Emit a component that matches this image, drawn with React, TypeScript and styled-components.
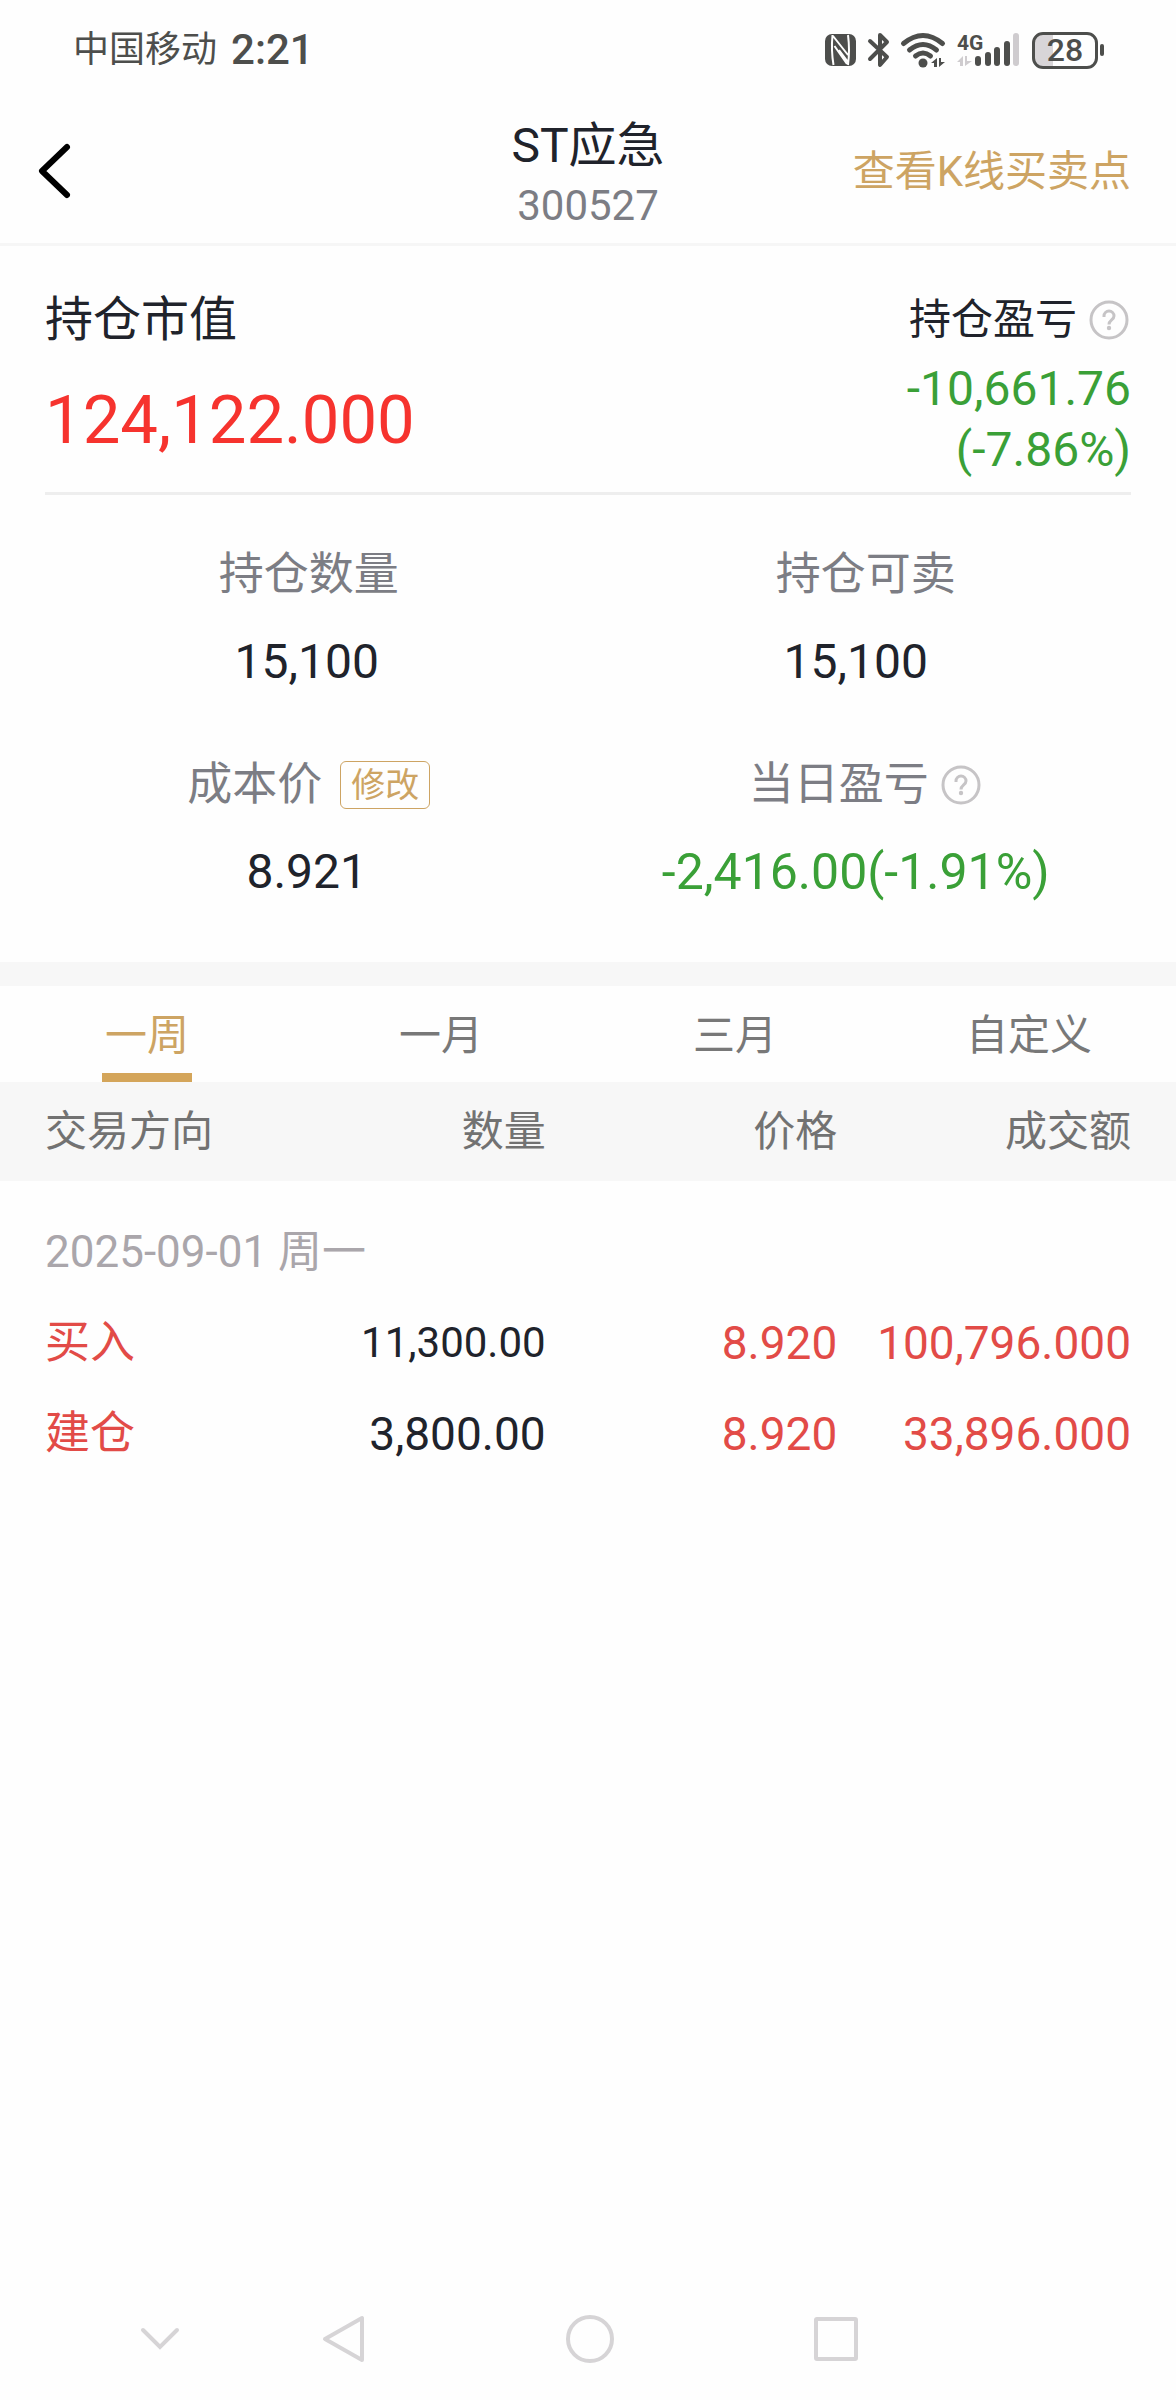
import React, { useState } from 'react';
import styled, { createGlobalStyle } from 'styled-components';

const color = {
  page: '#fefefe',
  band: '#f7f7f7',
  line: '#eeeeee',
  ink: '#20232b',
  status: '#4d4e4c',
  label: '#7c7d84',
  tab: '#787878',
  date: '#aaa6ab',
  hint: '#c6c4c6',
  nav: '#d6d4d6',
  gold: '#cda463',
  goldBar: '#d4a55a',
  up: '#f6332e',
  buy: '#e24b47',
  down: '#3aa037',
};

const GlobalStyle = createGlobalStyle`
  *, *::before, *::after { box-sizing: border-box; }
  body {
    margin: 0;
    background: ${color.page};
    color: ${color.ink};
    font-family: Roboto, 'Noto Sans CJK SC', sans-serif;
    font-size: 42px;
    line-height: 60px;
  }
  h1, h2, p, dl, dt, dd { margin: 0; font-weight: 400; }
  button { font: inherit; color: inherit; background: none; border: 0; padding: 0; cursor: pointer; }
  svg { display: block; flex: none; overflow: visible; }
`;

const Page = styled.div`
  min-height: 100vh;
  display: flex;
  flex-direction: column;
`;

const StatusBar = styled.div`
  display: flex;
  align-items: center;
  justify-content: space-between;
  height: 100px;
  padding: 0 72px 0 73px;
  color: ${color.status};
`;

const StatusGroup = styled.div<{ $gap: number }>`
  display: flex;
  align-items: center;
  gap: ${(p) => p.$gap}px;
`;

const Carrier = styled.span`
  font-size: 36px;
`;

const Clock = styled.span`
  font-size: 42px;
  font-weight: 500;
`;

const Battery = styled.span`
  display: flex;
  align-items: center;
  gap: 2px;
`;

const BatteryBody = styled.span<{ $level: number }>`
  width: 66px;
  height: 37px;
  border: 3px solid ${color.status};
  border-radius: 11px;
  background: linear-gradient(to right, #d8d5d8 ${(p) => p.$level}%, transparent ${(p) => p.$level}%);
  font-size: 32px;
  font-weight: 500;
  line-height: 31px;
  text-align: center;
`;

const BatteryTip = styled.span`
  width: 4px;
  height: 12px;
  border-radius: 2px;
  background: ${color.status};
`;

const Header = styled.header`
  display: grid;
  grid-template-columns: 1fr auto 1fr;
  align-items: center;
  height: 146px;
  padding: 0 36px;
  border-bottom: 3px solid #f6f6f6;
`;

const BackButton = styled.button`
  justify-self: start;
`;

const TitleBlock = styled.div`
  text-align: center;
  padding-top: 8px;
`;

const Title = styled.h1`
  font-size: 48px;
  line-height: 60px;
`;

const Code = styled.p`
  color: ${color.label};
`;

const HeaderLink = styled.a`
  justify-self: end;
  padding-right: 9px;
  color: ${color.gold};
  text-decoration: none;
`;

const Summary = styled.section`
  display: flex;
  justify-content: space-between;
  margin: 0 45px;
  padding: 42px 0 12px;
  border-bottom: 3px solid ${color.line};
`;

const SummaryColumn = styled.div<{ $gap: number; $align: string }>`
  display: flex;
  flex-direction: column;
  align-items: ${(p) => p.$align};
  gap: ${(p) => p.$gap}px;
`;

const SummaryLabel = styled.h2<{ $size: number }>`
  display: flex;
  align-items: center;
  gap: 12px;
  font-size: ${(p) => p.$size}px;
  line-height: 64px;
`;

const MarketValue = styled.p`
  font-size: 67px;
  line-height: 80px;
  color: ${color.up};
`;

const Profit = styled.p`
  font-size: 48px;
  line-height: 61px;
  text-align: right;
  color: ${color.down};
`;

const HintButton = styled.button`
  color: ${color.hint};
`;

const Stats = styled.dl`
  display: grid;
  grid-template-columns: 525fr 546fr;
  column-gap: 15px;
  row-gap: 59px;
  padding: 48px 48px 58px 45px;
`;

const Stat = styled.div`
  display: flex;
  flex-direction: column;
  align-items: center;
  gap: 23px;

  dt { padding-left: 4px; }
  &:nth-child(even) dt { padding-left: 20px; }
`;

const StatLabel = styled.dt<{ $gap?: number }>`
  display: flex;
  align-items: center;
  gap: ${(p) => p.$gap ?? 12}px;
  font-size: 45px;
  line-height: 64px;
  color: ${color.label};
`;

const StatValue = styled.dd<{ $down?: boolean }>`
  font-size: ${(p) => (p.$down ? 50 : 48)}px;
  line-height: 64px;
  color: ${(p) => (p.$down ? color.down : color.ink)};
`;

const EditButton = styled.button`
  width: 90px;
  height: 48px;
  border: 1px solid ${color.gold};
  border-radius: 6px;
  font-size: 34px;
  line-height: 44px;
  color: ${color.gold};
`;

const Tabs = styled.div`
  display: grid;
  grid-template-columns: repeat(4, 1fr);
  height: 120px;
  border-top: 24px solid ${color.band};
`;

const Tab = styled.button<{ $active: boolean }>`
  display: flex;
  flex-direction: column;
  align-items: center;
  justify-content: space-between;
  line-height: 60px;
  padding-top: 20px;
  color: ${(p) => (p.$active ? color.gold : color.tab)};

  &::after {
    content: '';
    width: 90px;
    height: 9px;
    background: ${(p) => (p.$active ? color.goldBar : 'transparent')};
  }
`;

const Trades = styled.table`
  width: 100%;
  table-layout: fixed;
  border-collapse: collapse;
`;

const Col = styled.col<{ $width?: string }>`
  width: ${(p) => p.$width ?? 'auto'};
`;

const HeadCell = styled.th`
  height: 99px;
  padding: 0;
  background: ${color.band};
  color: #727272;
  font-weight: 400;
  text-align: right;

  &:first-child { padding-left: 45px; text-align: left; }
  &:last-child { padding-right: 45px; }
`;

const DateCell = styled.th`
  height: 116px;
  padding: 26px 45px 0;
  font-size: 44px;
  font-weight: 400;
  text-align: left;
  color: ${color.date};
`;

const Cell = styled.td<{ $size?: number; $plain?: boolean }>`
  height: 91px;
  padding: 0;
  font-size: ${(p) => p.$size ?? 46}px;
  color: ${(p) => (p.$plain ? color.ink : color.buy)};
  text-align: right;
  white-space: nowrap;

  &:first-child { padding-left: 45px; text-align: left; }
  &:last-child { padding-right: 45px; }
`;

const NavBar = styled.nav`
  display: grid;
  grid-template-columns: 120fr 244fr 244fr 244fr;
  align-items: center;
  justify-items: center;
  height: 122px;
  margin-top: auto;
  padding: 0 18.5% 0 8.5%;
  color: ${color.nav};
`;

const NfcIcon = () => (
  <svg width="31" height="32" viewBox="0 0 31 32" aria-hidden="true">
    <rect width="31" height="32" rx="7" fill="currentColor" />
    <path d="M7.500 1 Q6 16 8.500 31 M23 1 Q25 16 23 31 M8 2 L23 21 M9.500 12 L22 30 M14 16 L23 28" fill="none" stroke={color.page} strokeWidth="2" />
  </svg>
);

const BluetoothIcon = () => (
  <svg width="21" height="36" viewBox="0 0 21 36" fill="none" stroke="currentColor" strokeWidth="4" strokeLinecap="round" strokeLinejoin="round" aria-hidden="true">
    <path d="M2 9 L19 25 L12 33 V3 L19 10 L2 27" />
  </svg>
);

const WifiIcon = () => (
  <svg width="44" height="36" viewBox="0 0 44 36" fill="none" stroke="currentColor" strokeWidth="5" strokeLinecap="round" aria-hidden="true">
    <path d="M2.500 11.500 Q22 -4.500 41.500 11.500 M8.500 18 Q22 7 35.500 18 M14.500 24 Q22 18 29.500 24" />
    <circle cx="22" cy="31" r="4.500" fill="currentColor" stroke="none" />
    <path d="M30 31 L36 26 V35 H33 V31 Z M38 26 H40 V30 H44 L38 35 Z" fill="currentColor" stroke="none" />
  </svg>
);

const SignalIcon = () => (
  <svg width="63" height="36" viewBox="0 0 63 36" fill="currentColor" aria-label="4G">
    <text x="0" y="18" fontSize="21" fontWeight="700">4G</text>
    <path d="M0 30 L6 24 V34 H3 V30 Z M8 24 H10 V29 H15 L8 34 Z" fill="#cfcccf" />
    <rect x="18" y="24" width="6" height="10" rx="3" />
    <rect x="28" y="20" width="6" height="14" rx="3" />
    <rect x="37" y="15" width="6" height="19" rx="3" />
    <rect x="47" y="9" width="6" height="25" rx="3" />
    <rect x="56" y="1" width="6" height="33" rx="3" fill="#cfcccf" />
  </svg>
);

const BackIcon = () => (
  <svg width="36" height="58" viewBox="0 0 36 58" fill="none" stroke="#000" strokeWidth="6" strokeLinecap="round" strokeLinejoin="round" aria-hidden="true">
    <path d="M31 4 L6 28 L31 52" />
  </svg>
);

const Hint = ({ label }: { label: string }) => (
  <HintButton type="button" aria-label={label}>
    <svg width="42" height="40" viewBox="0 0 42 40" fill="none" stroke="currentColor" strokeWidth="3" aria-hidden="true">
      <circle cx="20" cy="20" r="18" />
      <path d="M15 17 V16 A5 5 0 0 1 25 16 C25 20 20 20 20 24.500" />
      <circle cx="20" cy="28" r="2.200" fill="currentColor" stroke="none" />
    </svg>
  </HintButton>
);

const periods = ['一周', '一月', '三月', '自定义'];

const trades = [
  { side: '买入', quantity: '11,300.00', price: '8.920', amount: '100,796.000', quantitySize: 42 },
  { side: '建仓', quantity: '3,800.00', price: '8.920', amount: '33,896.000', quantitySize: 46 },
];

export default function App() {
  const [period, setPeriod] = useState(periods[0]);

  return (
    <Page>
      <GlobalStyle />
      <StatusBar>
        <StatusGroup $gap={14}>
          <Carrier>中国移动</Carrier>
          <Clock>2:21</Clock>
        </StatusGroup>
        <StatusGroup $gap={12}>
          <NfcIcon />
          <BluetoothIcon />
          <WifiIcon />
          <SignalIcon />
          <Battery>
            <BatteryBody $level={30}>28</BatteryBody>
            <BatteryTip />
          </Battery>
        </StatusGroup>
      </StatusBar>

      <Header>
        <BackButton type="button" aria-label="返回">
          <BackIcon />
        </BackButton>
        <TitleBlock>
          <Title>ST应急</Title>
          <Code>300527</Code>
        </TitleBlock>
        <HeaderLink href="#kline">查看K线买卖点</HeaderLink>
      </Header>

      <main>
        <Summary>
          <SummaryColumn $gap={28} $align="flex-start">
            <SummaryLabel $size={48}>持仓市值</SummaryLabel>
            <MarketValue>124,122.000</MarketValue>
          </SummaryColumn>
          <SummaryColumn $gap={6} $align="flex-end">
            <SummaryLabel $size={42}>
              持仓盈亏
              <Hint label="持仓盈亏说明" />
            </SummaryLabel>
            <Profit>
              -10,661.76
              <br />
              (-7.86%)
            </Profit>
          </SummaryColumn>
        </Summary>

        <Stats>
          <Stat>
            <StatLabel>持仓数量</StatLabel>
            <StatValue>15,100</StatValue>
          </Stat>
          <Stat>
            <StatLabel>持仓可卖</StatLabel>
            <StatValue>15,100</StatValue>
          </Stat>
          <Stat>
            <StatLabel $gap={18}>
              成本价
              <EditButton type="button">修改</EditButton>
            </StatLabel>
            <StatValue>8.921</StatValue>
          </Stat>
          <Stat>
            <StatLabel>
              当日盈亏
              <Hint label="当日盈亏说明" />
            </StatLabel>
            <StatValue $down>-2,416.00(-1.91%)</StatValue>
          </Stat>
        </Stats>

        <Tabs role="tablist">
          {periods.map((name) => (
            <Tab
              key={name}
              type="button"
              role="tab"
              aria-selected={name === period}
              $active={name === period}
              onClick={() => setPeriod(name)}
            >
              {name}
            </Tab>
          ))}
        </Tabs>

        <Trades>
          <colgroup>
            <Col $width="22%" />
            <Col $width="24.4%" />
            <Col $width="24.8%" />
            <Col />
          </colgroup>
          <thead>
            <tr>
              <HeadCell scope="col">交易方向</HeadCell>
              <HeadCell scope="col">数量</HeadCell>
              <HeadCell scope="col">价格</HeadCell>
              <HeadCell scope="col">成交额</HeadCell>
            </tr>
          </thead>
          <tbody>
            <tr>
              <DateCell colSpan={4} scope="rowgroup">2025-09-01 周一</DateCell>
            </tr>
            {trades.map((trade) => (
              <tr key={trade.side}>
                <Cell $size={45}>{trade.side}</Cell>
                <Cell $plain $size={trade.quantitySize}>{trade.quantity}</Cell>
                <Cell>{trade.price}</Cell>
                <Cell>{trade.amount}</Cell>
              </tr>
            ))}
          </tbody>
        </Trades>
      </main>

      <NavBar>
        <button type="button" aria-label="收起">
          <svg width="40" height="24" viewBox="0 0 40 24" fill="none" stroke="currentColor" strokeWidth="4" strokeLinecap="round" aria-hidden="true">
            <path d="M3 3 L20 20 L37 3" />
          </svg>
        </button>
        <button type="button" aria-label="后退">
          <svg width="44" height="48" viewBox="0 0 44 48" fill="none" stroke="currentColor" strokeWidth="4" strokeLinejoin="round" aria-hidden="true">
            <path d="M40 3 V45 L3 24 Z" />
          </svg>
        </button>
        <button type="button" aria-label="主屏幕">
          <svg width="48" height="48" viewBox="0 0 48 48" fill="none" stroke="currentColor" strokeWidth="4" aria-hidden="true">
            <circle cx="24" cy="24" r="22" />
          </svg>
        </button>
        <button type="button" aria-label="最近任务">
          <svg width="44" height="44" viewBox="0 0 44 44" fill="none" stroke="currentColor" strokeWidth="4" aria-hidden="true">
            <rect x="2" y="2" width="40" height="40" rx="1" />
          </svg>
        </button>
      </NavBar>
    </Page>
  );
}
